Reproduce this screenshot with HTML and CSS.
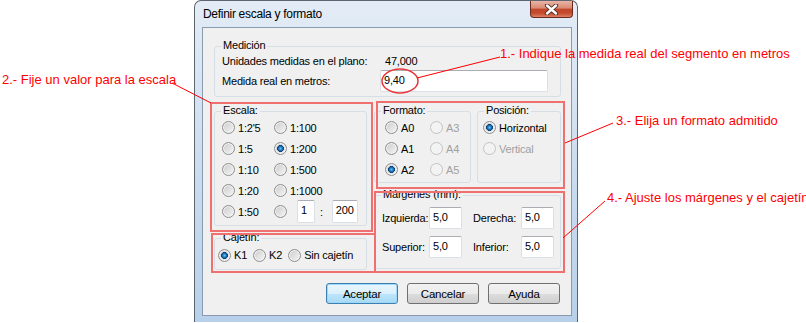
FILE: index.html
```html
<!DOCTYPE html>
<html lang="es">
<head>
  <meta charset="UTF-8">
  <meta name="viewport" content="width=device-width, initial-scale=1.0">
  <title>Definir escala y formato</title>
  <link rel="stylesheet" href="styles.css">
</head>
<body>
  <div class="page">
    <div class="window">
      <div class="titlebar">
        <span class="title">Definir escala y formato</span>
        <button type="button" class="close" aria-label="Cerrar">
          <svg width="15" height="11" viewBox="0 0 15 11">
            <path d="M3 1.5 L12 9.5 M12 1.5 L3 9.5" stroke="#4a2a24" stroke-width="4.2" stroke-linecap="round"/>
            <path d="M3 1.5 L12 9.5 M12 1.5 L3 9.5" stroke="#fff" stroke-width="2.4" stroke-linecap="round"/>
          </svg>
        </button>
      </div>

      <div class="client">
        <div class="group medicion">
          <span class="caption">Medición</span>
          <div class="med-grid">
            <span>Unidades medidas en el plano:</span>
            <span class="value">47,000</span>
            <label for="real">Medida real en metros:</label>
            <input id="real" class="tb tb-real" type="text" value="9,40">
          </div>
        </div>

        <div class="main">
          <div class="col-left">
            <div class="group escala">
              <span class="caption">Escala:</span>
              <div class="escala-grid">
                <label class="opt"><input type="radio" name="esc">1:2'5</label>
                <label class="opt"><input type="radio" name="esc">1:100</label>
                <label class="opt"><input type="radio" name="esc">1:5</label>
                <label class="opt"><input type="radio" name="esc" checked>1:200</label>
                <label class="opt"><input type="radio" name="esc">1:10</label>
                <label class="opt"><input type="radio" name="esc">1:500</label>
                <label class="opt"><input type="radio" name="esc">1:20</label>
                <label class="opt"><input type="radio" name="esc">1:1000</label>
                <label class="opt"><input type="radio" name="esc">1:50</label>
                <div class="opt custom">
                  <input type="radio" name="esc">
                  <input class="tb tb-num" type="text" value="1">
                  <span class="colon">:</span>
                  <input class="tb tb-den" type="text" value="200">
                </div>
              </div>
            </div>

            <div class="group cajetin">
              <span class="caption">Cajetín:</span>
              <div class="caj-row">
                <label class="opt"><input type="radio" name="caj" checked>K1</label>
                <label class="opt"><input type="radio" name="caj">K2</label>
                <label class="opt"><input type="radio" name="caj">Sin cajetín</label>
              </div>
            </div>
          </div>

          <div class="col-right">
            <div class="top-row">
              <div class="group formato">
                <span class="caption">Formato:</span>
                <div class="formato-grid">
                  <label class="opt"><input type="radio" name="fmt">A0</label>
                  <label class="opt off"><input type="radio" name="fmt" disabled>A3</label>
                  <label class="opt"><input type="radio" name="fmt">A1</label>
                  <label class="opt off"><input type="radio" name="fmt" disabled>A4</label>
                  <label class="opt"><input type="radio" name="fmt" checked>A2</label>
                  <label class="opt off"><input type="radio" name="fmt" disabled>A5</label>
                </div>
              </div>
              <div class="group posicion">
                <span class="caption">Posición:</span>
                <div class="pos-list">
                  <label class="opt"><input type="radio" name="pos" checked>Horizontal</label>
                  <label class="opt off"><input type="radio" name="pos" disabled>Vertical</label>
                </div>
              </div>
            </div>

            <div class="group margenes">
              <span class="caption">Márgenes (mm):</span>
              <div class="marg-grid">
                <label for="m-izq">Izquierda:</label>
                <input id="m-izq" class="tb tb-m" type="text" value="5,0">
                <label for="m-der">Derecha:</label>
                <input id="m-der" class="tb tb-m" type="text" value="5,0">
                <label for="m-sup">Superior:</label>
                <input id="m-sup" class="tb tb-m" type="text" value="5,0">
                <label for="m-inf">Inferior:</label>
                <input id="m-inf" class="tb tb-m" type="text" value="5,0">
              </div>
            </div>
          </div>
        </div>

        <div class="buttons">
          <button type="button" class="btn default">Aceptar</button>
          <button type="button" class="btn">Cancelar</button>
          <button type="button" class="btn">Ayuda</button>
        </div>
      </div>
    </div>

    <!-- marcas de ayuda sobre la captura -->
    <svg class="marks" width="806" height="323" viewBox="0 0 806 323">
      <g fill="none" stroke="#f07070" stroke-width="2">
        <rect x="211" y="103" width="161" height="128"/>
        <rect x="212" y="234" width="163" height="38"/>
        <rect x="377" y="102" width="187" height="86"/>
        <rect x="375" y="192" width="189" height="80"/>
      </g>
      <ellipse cx="400" cy="81" rx="18" ry="12" fill="none" stroke="#e8383c" stroke-width="1.5"/>
      <g stroke="#ff0000" stroke-width="1">
        <line x1="417" y1="78" x2="500" y2="57"/>
        <line x1="172" y1="83" x2="211" y2="103"/>
        <line x1="565" y1="143" x2="613" y2="123"/>
        <line x1="563" y1="238" x2="605" y2="201"/>
      </g>
    </svg>
    <p class="note n1">1.- Indique la medida real del segmento en metros</p>
    <p class="note n2">2.- Fije un valor para la escala</p>
    <p class="note n3">3.- Elija un formato admitido</p>
    <p class="note n4">4.- Ajuste los márgenes y el cajetín</p>
  </div>
</body>
</html>
```

FILE: styles.css
```css
body { margin: 0; background: #fff; font-family: "Liberation Sans", Arial, sans-serif; font-size: 11px; letter-spacing: -0.2px; color: #000; }
.page { position: relative; width: 806px; height: 323px; overflow: hidden; }

/* ventana */
.window { box-sizing: border-box; margin-left: 194px; width: 384px; height: 322px; padding: 0 5px 5px 7px; border: 1px solid #5d6670; border-bottom: none; border-radius: 7px 7px 0 0; background: linear-gradient(#e3ecf6, #c8daee 60%, #b7d0ea); }
.titlebar { display: flex; align-items: flex-start; height: 26px; margin: 0 -5px 0 -7px; padding: 0 4px 0 8px; }
.title { font-size: 12px; letter-spacing: -0.3px; line-height: 27px; }
.close { margin-left: auto; width: 43px; height: 17px; padding: 0; display: flex; align-items: center; justify-content: center; border: 1px solid #6b2b20; border-top: none; border-radius: 0 0 4px 4px; background: linear-gradient(#eab4a6, #d88a74 45%, #c4462b 50%, #c24a2c 75%, #df8164); }
.close svg { display: block; }

.client { box-sizing: border-box; width: 370px; height: 289px; border: 1px solid #8a9bb0; background: #f0f0f0; padding: 0 0 0 11px; }

/* marcos de grupo */
.group { position: relative; box-sizing: border-box; border: 1px solid #d5dfe5; border-radius: 3px; }
.caption { position: absolute; top: -8px; left: 6px; padding: 0 2px; line-height: 13px; background: #f0f0f0; }

.medicion { margin-top: 18px; width: 347px; height: 51px; padding: 7px 0 0 7px; }
.med-grid { display: grid; grid-template-columns: 158px 168px; grid-template-rows: 14px 22px; row-gap: 2px; align-items: center; }
.value { padding-left: 5px; }

.main { display: flex; gap: 7px; margin-top: 14px; }
.col-left { width: 153px; display: flex; flex-direction: column; gap: 12px; }
.col-right { width: 187px; display: flex; flex-direction: column; gap: 12px; }
.top-row { display: flex; gap: 6px; }

.escala { height: 115px; padding: 5px 0 0 7px; }
.escala-grid { display: grid; grid-template-columns: 52px auto; grid-auto-rows: 21px; }
.cajetin { height: 32px; padding: 9px 0 0 3px; }
.caj-row { display: flex; gap: 6px; line-height: 15px; }
.formato { width: 97px; height: 72px; padding: 5px 0 0 10px; }
.formato-grid { display: grid; grid-template-columns: 45px auto; grid-auto-rows: 21px; }
.posicion { width: 84px; height: 72px; padding: 5px 0 0 5px; }
.pos-list { display: grid; grid-auto-rows: 21px; }
.margenes { height: 74px; padding: 11px 0 0 7px; }
.marg-grid { display: grid; grid-template-columns: 47px 33px 59px 32px; grid-template-rows: 22px 22px; row-gap: 7px; align-items: center; }
.marg-grid label:nth-of-type(even) { margin-left: 11px; }

/* opciones */
.opt { display: flex; align-items: center; gap: 3px; white-space: nowrap; }
.opt.off { color: #a0a0a0; }
.custom { gap: 0; }
.colon { margin: 0 9px 0 5px; }

input[type="radio"] { appearance: none; -webkit-appearance: none; flex: none; width: 13px; height: 13px; margin: 0; border: 1px solid #8e8f8f; border-radius: 50%; box-sizing: border-box; background: linear-gradient(135deg, #cbcbcb, #f6f6f6); box-shadow: inset 0 0 0 1px #f2f2f2; }
input[type="radio"]:checked { background: radial-gradient(circle 3.6px at 50% 50%, #6cc0f2 0, #1f7bc4 1.8px, #0c3f72 3.2px, transparent 3.7px), linear-gradient(135deg, #cbcbcb, #f6f6f6); }
input[type="radio"]:disabled { border-color: #c2c2c2; background: #f3f3f3; box-shadow: none; }
.custom input[type="radio"] { margin-right: 10px; }

/* cajas de texto */
.tb { box-sizing: border-box; height: 22px; margin: 0; padding: 0 0 3px 3px; border: 1px solid #dbdfe6; border-top-color: #abadb3; border-radius: 2px; background: #fff; font: inherit; letter-spacing: inherit; color: #000; }
.tb-real { width: 168px; }
.tb-num { width: 18px; height: 23px; }
.tb-den { width: 26px; height: 23px; }
.tb-m { width: 33px; }

/* botones */
.buttons { display: flex; gap: 9px; margin: 13px 0 0 112px; }
.btn { width: 72px; height: 21px; padding: 0; border: 1px solid #707070; border-radius: 3px; background: linear-gradient(#f2f2f2, #ebebeb 50%, #dddddd 50%, #cfcfcf); font: inherit; font-size: 11.5px; letter-spacing: inherit; color: #000; }
.btn.default { border-color: #3c7fb1; box-shadow: inset 0 0 0 1px #9ed8f6; background: linear-gradient(#eaf6fd, #d9f0fc 50%, #bee6fd 50%, #a7d9f5); }

/* anotaciones */
.marks { position: absolute; top: 0; left: 0; pointer-events: none; }
.note { position: absolute; margin: 0; font-size: 13px; line-height: 15px; letter-spacing: 0; color: #ff0000; white-space: nowrap; }
.n1 { left: 500px; top: 46px; }
.n2 { left: 2px; top: 72px; }
.n3 { left: 616px; top: 113px; }
.n4 { left: 607px; top: 190px; }
```
